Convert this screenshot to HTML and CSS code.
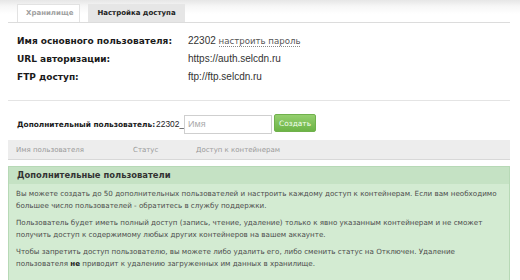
FILE: index.html
```html
<!DOCTYPE html>
<html>
<head>
<meta charset="utf-8">
<link rel="stylesheet" href="styles.css">
</head>
<body>
<div class="page">
  <div class="tabs">
    <div class="tab tab-light">Хранилище</div>
    <div class="tab tab-active">Настройка доступа</div>
  </div>
  <div class="info">
    <div class="label">Имя основного пользователя:</div>
    <div class="value">22302 <span class="link">настроить пароль</span></div>
    <div class="label">URL авторизации:</div>
    <div class="value">https://auth.selcdn.ru</div>
    <div class="label">FTP доступ:</div>
    <div class="value">ftp://ftp.selcdn.ru</div>
  </div>
  <div class="adduser">
    <span class="addlabel">Дополнительный пользователь:</span>
    <span class="prefix">22302_</span>
    <input class="name" type="text" placeholder="Имя">
    <button class="create">Создать</button>
  </div>
  <div class="thead">
    <div class="th th1">Имя пользователя</div>
    <div class="th th2">Статус</div>
    <div class="th th3">Доступ к контейнерам</div>
  </div>
  <div class="panel">
    <div class="panel-title">Дополнительные пользователи</div>
    <div class="panel-body">
      <p>Вы можете создать до 50 дополнительных пользователей и настроить каждому доступ к контейнерам. Если вам необходимо большее число пользователей - обратитесь в службу поддержки.</p>
      <p>Пользователь будет иметь полный доступ (запись, чтение, удаление) только к явно указанным контейнерам и не сможет получить доступ к содержимому любых других контейнеров на вашем аккаунте.</p>
      <p>Чтобы запретить доступ пользователю, вы можете либо удалить его, либо сменить статус на Отключен. Удаление пользователя <b>не</b> приводит к удалению загруженных им данных в хранилище.</p>
    </div>
  </div>
</div>
</body>
</html>
```
FILE: styles.css
```css
html, body {
  margin: 0;
  padding: 0;
}
body {
  width: 520px;
  height: 280px;
  overflow: hidden;
  background: linear-gradient(#e6e6e6 0px, #f6f6f6 6px, #ffffff 14px);
  font-family: "DejaVu Sans", Verdana, sans-serif;
  color: #333;
}
.page {
  padding: 4px 10px 0 8px;
}
.tabs {
  display: flex;
  gap: 8px;
  padding-left: 9px;
  border-bottom: 1px solid #dcdcdc;
  height: 18px;
}
.tab {
  height: 18px;
  box-sizing: border-box;
  padding: 0 8px;
  font-size: 7px;
  line-height: 17px;
  font-weight: bold;
}
.tab-light {
  background: #fff;
  border: 1px solid #e2e2e2;
  border-bottom: none;
  color: #a0a0a0;
  width: 63px;
  text-align: center;
}
.tab-active {
  background: #e6e6e6;
  color: #222;
  border: 1px solid #e6e6e6;
  width: 97px;
  text-align: center;
}
.info {
  display: grid;
  grid-template-columns: 171px 1fr;
  grid-auto-rows: 18px;
  align-content: start;
  padding: 9px 0 0 9px;
  height: 68px;
  border-bottom: 1px solid #e4e4e4;
}
.label {
  font-size: 9px;
  font-weight: bold;
  color: #1a1a1a;
  line-height: 18px;
}
.value {
  font-family: "Liberation Sans", Arial, sans-serif;
  font-size: 10px;
  color: #333;
  line-height: 18px;
}
.link {
  font-family: "DejaVu Sans", Verdana, sans-serif;
  font-size: 8.6px;
  color: #555;
  border-bottom: 1px dotted #888;
}
.adduser {
  display: flex;
  align-items: center;
  padding: 13px 0 0 9px;
  height: 20px;
}
.addlabel {
  font-size: 7.4px;
  font-weight: bold;
  color: #1a1a1a;
}
.prefix {
  font-family: "Liberation Sans", Arial, sans-serif;
  font-size: 8.4px;
  margin-left: 1px;
  color: #222;
}
.name {
  width: 88px;
  height: 19px;
  box-sizing: border-box;
  border: 1px solid #cfcfcf;
  padding: 0 3px;
  margin: 0 2px 0 0;
  font-family: "Liberation Sans", Arial, sans-serif;
  font-size: 9px;
  color: #333;
  outline: none;
}
.name::placeholder {
  color: #aaa;
}
.create {
  height: 18px;
  width: 42px;
  box-sizing: border-box;
  padding: 0;
  border: 1px solid #70b14c;
  border-radius: 2px;
  background: linear-gradient(#94cf6e, #6cb446);
  color: #f4fff0;
  font-family: "DejaVu Sans", Verdana, sans-serif;
  font-size: 7.4px;
  margin-top: -2px;
}
.thead {
  display: flex;
  margin-top: 6px;
  height: 19px;
  background: #ededed;
  border-bottom: 1px solid #d8d8d8;
  align-items: center;
  font-size: 7px;
  color: #9a9a9a;
}
.th1 { padding-left: 8px; width: 117px; }
.th2 { width: 63px; }
.panel {
  margin-top: 6px;
  background: #d3ebd2;
  border: 1px solid #b7d9b6;
}
.panel-title {
  background: #c5e2c4;
  height: 17px;
  line-height: 17px;
  padding-left: 8px;
  font-size: 8.4px;
  font-weight: bold;
  color: #333;
}
.panel-body {
  padding: 2px 7px 6px 7px;
  font-size: 7.15px;
  color: #4d4d4d;
  line-height: 12px;
}
.panel-body p {
  margin: 2px 0 5px 0;
}
.panel-body b {
  color: #222;
}
```
